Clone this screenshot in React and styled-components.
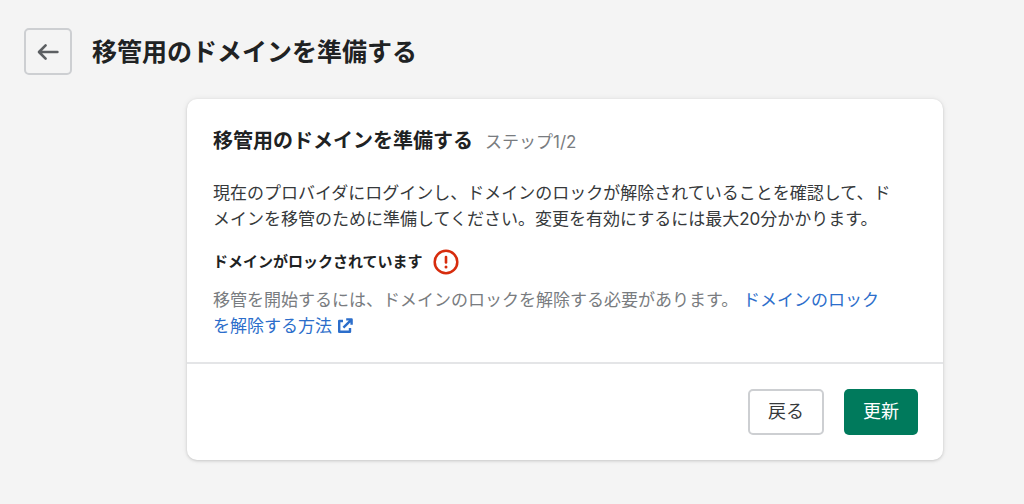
import React from 'react';
import styled, { createGlobalStyle } from 'styled-components';


function App() {
    return (
        <>
            <GlobalStyle />
            <Page>
                <Header>
                    <BackButton type="button" aria-label="戻る">
                        <ArrowIcon />
                    </BackButton>
                    <PageTitle>移管用のドメインを準備する</PageTitle>
                </Header>

                <Content>
                    <Card>
                        <CardBody>
                            <CardHeader>
                                <CardTitle>移管用のドメインを準備する</CardTitle>
                                <Step>ステップ1/2</Step>
                            </CardHeader>
                            <Text>
                                現在のプロバイダにログインし、ドメインのロックが解除されていることを確認して、ドメインを移管のために準備してください。変更を有効にするには最大20分かかります。
                            </Text>
                            <Status>
                                <StatusTitle>ドメインがロックされています</StatusTitle>
                                <AlertIcon />
                            </Status>
                            <Text $subdued>
                                移管を開始するには、ドメインのロックを解除する必要があります。{' '}
                                <HelpLink href="#unlock">
                                    ドメインのロックを解除する方法
                                    <ExternalIcon />
                                </HelpLink>
                            </Text>
                        </CardBody>
                        <CardFooter>
                            <Button type="button">戻る</Button>
                            <Button type="button" $primary>更新</Button>
                        </CardFooter>
                    </Card>
                </Content>
            </Page>
        </>
    )
}

const ArrowIcon = () => (
    <svg width="22" height="18" viewBox="0 0 22 18" fill="none" stroke="#5c5f62" strokeWidth="2.6" strokeLinecap="round" strokeLinejoin="round" aria-hidden="true">
        <path d="M20.4 9H2.4M8.6 2.4L2 9l6.6 6.6" />
    </svg>
);

const AlertIcon = () => (
    <svg width="26" height="26" viewBox="0 0 26 26" fill="none" aria-hidden="true">
        <circle cx="13" cy="13" r="11.3" stroke="#d72c0d" strokeWidth="2.5" />
        <path d="M13 8v5.4" stroke="#d72c0d" strokeWidth="2.6" strokeLinecap="round" />
        <circle cx="13" cy="18" r="1.5" fill="#d72c0d" />
    </svg>
);

const ExternalIcon = () => (
    <LinkIcon width="16" height="16" viewBox="0 0 16 16" fill="none" stroke="currentColor" strokeWidth="2.4" strokeLinejoin="round" aria-hidden="true">
        <path d="M6 3H2.2v10.8H13V10" />
        <path d="M9.2 1.4h5.4v5.4M14.2 1.8L6.4 9.6" />
    </LinkIcon>
);

export default App;

const GlobalStyle = createGlobalStyle`
    * {
        box-sizing: border-box;
    }

    body {
        margin: 0;
        background: #f4f4f4;
        color: #202223;
        font-family: Inter, 'Noto Sans CJK JP', sans-serif;
        font-size: 17px;
        line-height: 26px;
    }
`;

const Page = styled.div`
    padding: 28px 24px 44px;
`;

const Header = styled.header`
    display: flex;
    align-items: center;
    gap: 20px;
    margin-bottom: 24px;
`;

const BackButton = styled.button`
    display: flex;
    align-items: center;
    justify-content: center;
    width: 48px;
    height: 47px;
    padding: 0;
    background: transparent;
    border: 2px solid #cdcfd2;
    border-radius: 5px;
    cursor: pointer;
`;

const PageTitle = styled.h1`
    margin: 0;
    font-size: 25px;
    line-height: 36px;
    font-weight: 600;
`;

const Content = styled.main`
    padding: 0 57px 0 163px;
`;

const Card = styled.section`
    background: #fff;
    border-radius: 10px;
    box-shadow: 0 0 6px rgba(23, 24, 24, 0.07), 0 1px 3px rgba(0, 0, 0, 0.15);
`;

const CardBody = styled.div`
    padding: 27px 26px 23px;
`;

const CardHeader = styled.div`
    display: flex;
    align-items: baseline;
    gap: 12px;
    margin-bottom: 24px;
`;

const CardTitle = styled.h2`
    margin: 0;
    font-size: 20px;
    line-height: 30px;
    font-weight: 600;
`;

const Step = styled.span`
    color: #797c80;
`;

const Text = styled.p`
    max-width: 40em;
    margin: 0;
    color: ${(props) => (props.$subdued ? '#797c80' : '#36393b')};
`;

const Status = styled.div`
    display: flex;
    align-items: center;
    gap: 10px;
    margin: 17px 0 12px;
`;

const StatusTitle = styled.h3`
    margin: 0;
    font-size: 15px;
    line-height: 26px;
    font-weight: 600;
`;

const HelpLink = styled.a`
    color: #2c6ecb;
    text-decoration: none;

    &:hover {
        text-decoration: underline;
    }
`;

const LinkIcon = styled.svg`
    margin-left: 5px;
    vertical-align: -2px;
`;

const CardFooter = styled.div`
    display: flex;
    justify-content: flex-end;
    gap: 20px;
    padding: 25px;
    border-top: 2px solid #e4e5e7;
`;

const Button = styled.button`
    height: 46px;
    padding: 0 ${(props) => (props.$primary ? '19px' : '18px')};
    background: ${(props) => (props.$primary ? '#007a5c' : '#fff')};
    border: ${(props) => (props.$primary ? '0' : '2px solid #cdcfd2')};
    border-radius: 5px;
    color: ${(props) => (props.$primary ? '#fff' : '#36393b')};
    font-family: inherit;
    font-size: 18px;
    line-height: 26px;
    cursor: pointer;
`;
